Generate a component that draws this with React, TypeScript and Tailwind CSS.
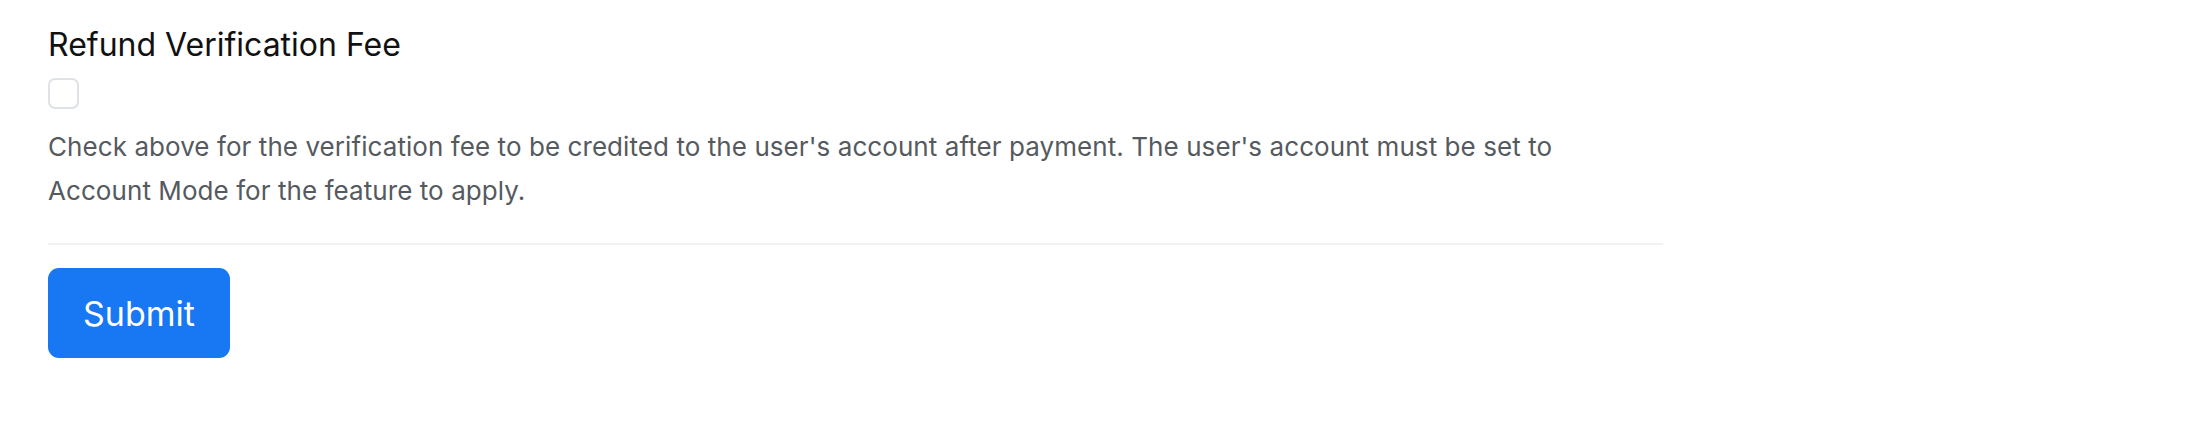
export default function App() {
  return (
    <div className="min-h-[436px] w-[2200px] bg-white font-['Inter','Liberation_Sans',sans-serif]">
      <form className="w-[1615px] ml-[48px] pt-[25px]" onSubmit={(e) => e.preventDefault()}>
        <label htmlFor="refund-fee" className="block text-[32px] leading-[40px] text-[#111111]">
          Refund Verification Fee
        </label>
        <input
          id="refund-fee"
          type="checkbox"
          className="mt-[13px] block h-[31px] w-[31px] appearance-none rounded-[7px] border-2 border-[#dee2e6] bg-white"
        />
        <p className="mt-[16px] w-[1605px] text-[26px] leading-[44px] tracking-[0.07px] text-[#555a5f]">
          Check above for the verification fee to be credited to the user's account after payment. The user's account
          must be set to Account Mode for the feature to apply.
        </p>
        <div className="mt-[30px] h-[2px] bg-[#f2f2f2]" />
        <button
          type="submit"
          className="mt-[23px] flex h-[90px] w-[182px] items-center justify-center rounded-[11px] bg-[#1877f2] text-[34px] text-white"
        >
          Submit
        </button>
      </form>
    </div>
  );
}
